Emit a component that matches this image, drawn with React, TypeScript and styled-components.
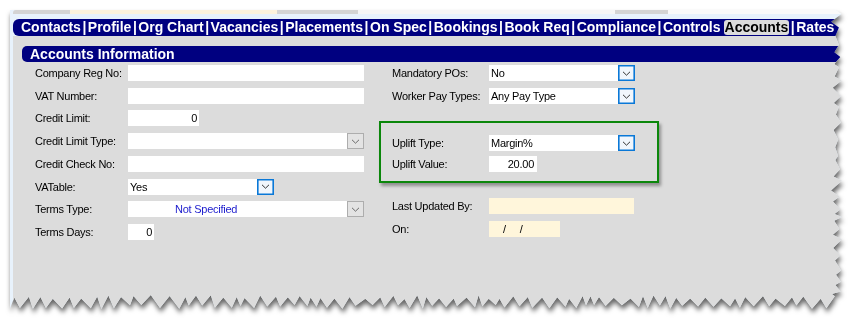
import React from 'react';
import styled, { createGlobalStyle } from 'styled-components';

const Global = createGlobalStyle`
  html, body { margin: 0; padding: 0; background: #ffffff; }
  body { font-family: "Liberation Sans", Arial, sans-serif; }
`;

function tornClip(w: number, h: number, seed: number): string {
  let s = seed;
  const rnd = () => {
    s = (s * 16807) % 2147483647;
    return (s - 1) / 2147483646;
  };
  const pts: string[] = ['0px 0px', `${w - 8}px 0px`];
  let y = 0;
  let up = true;
  while (y < h - 16) {
    y += 3 + rnd() * 7;
    const x = up ? w - 2 - rnd() * 4 : w - 8 - rnd() * 5;
    up = !up;
    pts.push(`${x.toFixed(1)}px ${Math.min(y, h - 16).toFixed(1)}px`);
  }
  let x = w - 6;
  let peak = true;
  while (x > 4) {
    x -= 3 + rnd() * 7;
    const yy = peak ? h - 11 - rnd() * 4 : h - 1 - rnd() * 4;
    peak = !peak;
    pts.push(`${Math.max(x, 0).toFixed(1)}px ${yy.toFixed(1)}px`);
  }
  pts.push(`0px ${h - 4}px`);
  return `polygon(${pts.join(', ')})`;
}

const CLIP = tornClip(834, 300, 20231);

const Stage = styled.div`
  width: 860px;
  height: 327px;
  padding: 10px 0 0 10px;
  box-sizing: border-box;
  overflow: hidden;
`;

const Shadow = styled.div`
  width: 834px;
  height: 300px;
  filter: drop-shadow(1px 4px 2.5px rgba(0, 0, 0, 0.6));
`;

const Sheet = styled.div<{ $clip: string }>`
  width: 100%;
  height: 100%;
  background: #e8f2fc;
  clip-path: ${(p) => p.$clip};
  display: flex;
  flex-direction: column;
`;

const TopStrip = styled.div`
  margin-left: 3px;
  height: 4px;
  display: flex;
  border-top-left-radius: 3px;
  overflow: hidden;
  flex: none;
`;

const StripPiece = styled.div<{ $w?: number; $tone: string }>`
  ${(p) => (p.$w ? `width: ${p.$w}px;` : 'flex: 1;')}
  background: ${(p) => p.$tone};
`;

const TabBar = styled.div`
  margin: 5px 0 0 3px;
  height: 17px;
  flex: none;
  background: #000080;
  border-radius: 6px 0 0 6px;
  display: flex;
  align-items: center;
  padding-left: 8px;
  white-space: nowrap;
  font: bold 14px/17px "Liberation Sans", Arial, sans-serif;
  color: #ffffff;
`;

const Tab = styled.span``;

const Sep = styled.span`
  margin: 0 1.5px;
`;

const ActiveTab = styled.span`
  margin-left: 3px;
  background: #dcdcdc;
  color: #000000;
  height: 15px;
  line-height: 15px;
  padding: 0 1px;
  border-radius: 3px;
`;

const Body = styled.div`
  flex: 1;
  margin-left: 3px;
  background: #dcdcdc;
  padding: 10px 0 0 9px;
`;

const Header = styled.div`
  height: 16px;
  background: #000080;
  border-radius: 5px 0 0 5px;
  padding-left: 8px;
  font: bold 14px/16px "Liberation Sans", Arial, sans-serif;
  color: #ffffff;
  white-space: nowrap;
`;

const Form = styled.div`
  display: flex;
  gap: 15px;
  padding-left: 13px;
  margin-top: 3px;
  align-items: flex-start;
`;

const LeftCol = styled.div`
  width: 329px;
  display: flex;
  flex-direction: column;
  gap: 6.72px;
`;

const RightCol = styled.div`
  display: flex;
  flex-direction: column;
  align-items: flex-start;
`;

const Row = styled.div<{ $indent?: number; $top?: number }>`
  display: flex;
  align-items: center;
  height: 16px;
  padding-left: ${(p) => p.$indent ?? 0}px;
  margin-top: ${(p) => p.$top ?? 0}px;
`;

const Label = styled.div<{ $w: number }>`
  width: ${(p) => p.$w}px;
  flex: none;
  font-size: 11px;
  letter-spacing: -0.25px;
  color: #000000;
  white-space: nowrap;
`;

const TextBox = styled.div<{ $w: number; $align?: string; $cream?: boolean; $pad?: number }>`
  width: ${(p) => p.$w}px;
  height: 16px;
  box-sizing: border-box;
  background: ${(p) => (p.$cream ? '#fff6db' : '#ffffff')};
  font-size: 11px;
  line-height: 16px;
  letter-spacing: -0.25px;
  color: #000000;
  text-align: ${(p) => p.$align ?? 'left'};
  padding: 0 ${(p) => p.$pad ?? 2}px;
  white-space: pre;
`;

const SelectBox = styled.div<{ $w: number }>`
  width: ${(p) => p.$w}px;
  height: 16px;
  display: flex;
  background: #ffffff;
`;

const SelectValue = styled.div<{ $indent?: number; $color?: string }>`
  flex: 1;
  font-size: 11px;
  line-height: 16px;
  letter-spacing: -0.25px;
  color: ${(p) => p.$color ?? '#000000'};
  padding-left: ${(p) => p.$indent ?? 2}px;
  white-space: nowrap;
`;

const DropButton = styled.div<{ $focus?: boolean }>`
  width: 17px;
  height: 16px;
  box-sizing: border-box;
  flex: none;
  display: flex;
  align-items: center;
  justify-content: center;
  border: 1px solid ${(p) => (p.$focus ? '#0a78d7' : '#adadad')};
  box-shadow: ${(p) => (p.$focus ? 'inset 0 0 0 0.6px #0a78d7' : 'none')};
  background: ${(p) => (p.$focus ? '#f1f6fc' : '#e3e3e3')};
`;

const UpliftBox = styled.div`
  margin-top: 17px;
  border: 2px solid #0b870b;
  padding: 12px 22px 9px 11px;
  display: flex;
  flex-direction: column;
  gap: 5px;
  box-shadow: 2px 3px 3px rgba(0, 0, 0, 0.35);
`;

const Chevron: React.FC<{ focus?: boolean }> = ({ focus }) => (
  <svg width="9" height="5" viewBox="0 0 9 5">
    <path d="M1 0.8 L4.5 4.2 L8 0.8" fill="none" stroke={focus ? '#333333' : '#6a6a6a'} strokeWidth="1" />
  </svg>
);

const Select: React.FC<{ w: number; value?: string; focus?: boolean; indent?: number; color?: string }> = ({
  w,
  value,
  focus,
  indent,
  color,
}) => (
  <SelectBox $w={w}>
    <SelectValue $indent={indent} $color={color}>{value}</SelectValue>
    <DropButton $focus={focus}>
      <Chevron focus={focus} />
    </DropButton>
  </SelectBox>
);

const tabs = ['Contacts', 'Profile', 'Org Chart', 'Vacancies', 'Placements', 'On Spec', 'Bookings', 'Book Req', 'Compliance', 'Controls'];

export default function App() {
  return (
    <Stage>
      <Global />
      <Shadow>
        <Sheet $clip={CLIP}>
          <TopStrip>
            <StripPiece $w={57} $tone="#d4d4d4" />
            <StripPiece $w={207} $tone="#fdf3dd" />
            <StripPiece $w={81} $tone="#d4d4d4" />
            <StripPiece $w={257} $tone="#f6f6f6" />
            <StripPiece $w={53} $tone="#d4d4d4" />
            <StripPiece $tone="#fafafa" />
          </TopStrip>
          <TabBar>
            {tabs.map((t, i) => (
              <React.Fragment key={t}>
                {i > 0 && <Sep>|</Sep>}
                <Tab>{t}</Tab>
              </React.Fragment>
            ))}
            <ActiveTab>Accounts</ActiveTab>
            <Sep>|</Sep>
            <Tab>Rates</Tab>
          </TabBar>
          <Body>
            <Header>Accounts Information</Header>
            <Form>
              <LeftCol>
                <Row>
                  <Label $w={93}>Company Reg No:</Label>
                  <TextBox $w={236} />
                </Row>
                <Row>
                  <Label $w={93}>VAT Number:</Label>
                  <TextBox $w={236} />
                </Row>
                <Row>
                  <Label $w={93}>Credit Limit:</Label>
                  <TextBox $w={71} $align="right">0</TextBox>
                </Row>
                <Row>
                  <Label $w={93}>Credit Limit Type:</Label>
                  <Select w={236} />
                </Row>
                <Row>
                  <Label $w={93}>Credit Check No:</Label>
                  <TextBox $w={236} />
                </Row>
                <Row>
                  <Label $w={93}>VATable:</Label>
                  <Select w={146} value="Yes" focus />
                </Row>
                <Row>
                  <Label $w={93}>Terms Type:</Label>
                  <Select w={236} value="Not Specified" indent={47} color="#1c1ccd" />
                </Row>
                <Row>
                  <Label $w={93}>Terms Days:</Label>
                  <TextBox $w={26} $align="right">0</TextBox>
                </Row>
              </LeftCol>
              <RightCol>
                <Row $indent={13}>
                  <Label $w={97}>Mandatory POs:</Label>
                  <Select w={146} value="No" focus />
                </Row>
                <Row $indent={13} $top={7}>
                  <Label $w={97}>Worker Pay Types:</Label>
                  <Select w={146} value="Any Pay Type" focus />
                </Row>
                <UpliftBox>
                  <Row>
                    <Label $w={97}>Uplift Type:</Label>
                    <Select w={146} value="Margin%" focus />
                  </Row>
                  <Row>
                    <Label $w={97}>Uplift Value:</Label>
                    <TextBox $w={48} $align="right" $pad={3}>20.00</TextBox>
                  </Row>
                </UpliftBox>
                <Row $indent={13} $top={15}>
                  <Label $w={97}>Last Updated By:</Label>
                  <TextBox $w={145} $cream />
                </Row>
                <Row $indent={13} $top={7}>
                  <Label $w={97}>On:</Label>
                  <TextBox $w={71} $cream $pad={14}>{'/     /'}</TextBox>
                </Row>
              </RightCol>
            </Form>
          </Body>
        </Sheet>
      </Shadow>
    </Stage>
  );
}
